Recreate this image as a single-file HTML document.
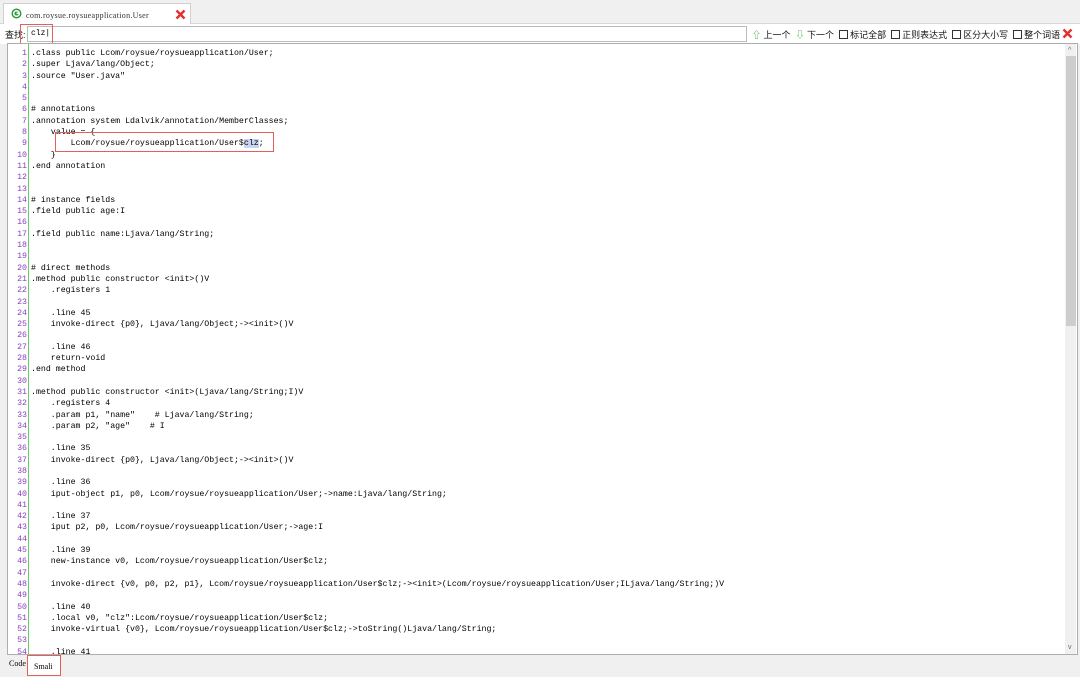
<!DOCTYPE html>
<html><head><meta charset="utf-8"><style>
*{margin:0;padding:0;box-sizing:border-box}
body{width:1080px;height:677px;background:#f0f0f0;position:relative;overflow:hidden;font-family:"Liberation Sans","Noto Sans CJK SC",sans-serif}
.tabbar{position:absolute;left:0;top:0;width:1080px;height:24px;background:#f0f0f0;border-bottom:1px solid #d8d8d8}
.tab{position:absolute;left:3px;top:3px;width:188px;height:22px;background:#fff;border:1px solid #d0d0d0;border-bottom:none}
.tab .t{position:absolute;left:22px;top:7px;font:8px "Liberation Serif",serif;color:#333;letter-spacing:.3px}
.find{position:absolute;left:0;top:24px;width:1080px;height:20px;background:#fff}
.inp{position:absolute;left:27px;top:26px;width:720px;height:16px;border:1px solid #bbb;background:#fff;font:8px "Liberation Mono",monospace;padding:2px 0 0 3px}
.lbl{position:absolute;top:28px;font-size:9px;color:#111;white-space:nowrap}
.cb{display:inline-block;width:9px;height:9px;border:1px solid #333;vertical-align:-1px;margin-right:2px;background:#fff}
.editor{position:absolute;left:7px;top:43px;width:1071px;height:612px;background:#fff;border:1px solid #adadad;overflow:hidden}
.gut{position:absolute;left:0;top:0;width:21px;height:100%;border-right:1px solid #6c6;}
pre{position:absolute;top:4px;font:8.25px/11.3px "Liberation Mono",monospace;white-space:pre}
.nums{left:0;width:19px;text-align:right;color:#8a3fbf}
.code{left:23px;color:#000}
.sb{position:absolute;right:1px;top:0;width:11px;height:610px;background:#f0f0f0}
.thumb{position:absolute;left:1px;top:12px;width:10px;height:270px;background:#cdcdcd}
.bottom{position:absolute;left:0;top:655px;width:1080px;height:22px;background:#f0f0f0}
.red{position:absolute;border:1px solid #e06060}
</style></head><body>
<div class="tabbar"><div class="tab">
<svg style="position:absolute;left:7px;top:4px" width="11" height="11" viewBox="0 0 11 11"><circle cx="5.5" cy="5.5" r="5" fill="#2a9a3a"/><circle cx="5.5" cy="5.5" r="2.8" fill="none" stroke="#fff" stroke-width="1.5"/><rect x="5.5" y="4.5" width="3" height="1.5" fill="#fff"/></svg>
<span class="t">com.roysue.roysueapplication.User</span>
<svg style="position:absolute;left:171px;top:5px" width="11" height="11" viewBox="0 0 11 11"><path d="M1.5 1.5L9.5 9.5M9.5 1.5L1.5 9.5" stroke="#e03030" stroke-width="2.4"/></svg>
</div></div>
<div class="find"></div>
<div class="lbl" style="left:5px">查找:</div>
<div class="inp">clz|</div>
<div class="lbl" style="left:752px"><span style="color:#3a3">⇧</span> 上一个 &nbsp;<span style="color:#3a3">⇩</span> 下一个 &nbsp;<span class="cb"></span>标记全部 &nbsp;<span class="cb"></span>正则表达式 &nbsp;<span class="cb"></span>区分大小写 &nbsp;<span class="cb"></span>整个词语</div>
<svg style="position:absolute;left:1062px;top:28px" width="11" height="11" viewBox="0 0 11 11"><path d="M1.5 1.5L9.5 9.5M9.5 1.5L1.5 9.5" stroke="#e03030" stroke-width="2.4"/></svg>
<div class="red" style="left:20px;top:24px;width:33px;height:20px"></div>
<div class="editor"><div class="gut"></div>
<pre class="nums">1
2
3
4
5
6
7
8
9
10
11
12
13
14
15
16
17
18
19
20
21
22
23
24
25
26
27
28
29
30
31
32
33
34
35
36
37
38
39
40
41
42
43
44
45
46
47
48
49
50
51
52
53
54</pre>
<pre class="code">.class public Lcom/roysue/roysueapplication/User;
.super Ljava/lang/Object;
.source "User.java"


# annotations
.annotation system Ldalvik/annotation/MemberClasses;
    value = {
        Lcom/roysue/roysueapplication/User$<span style="background:#c8d4f0">clz</span>;
    }
.end annotation


# instance fields
.field public age:I

.field public name:Ljava/lang/String;


# direct methods
.method public constructor &lt;init&gt;()V
    .registers 1

    .line 45
    invoke-direct {p0}, Ljava/lang/Object;-&gt;&lt;init&gt;()V

    .line 46
    return-void
.end method

.method public constructor &lt;init&gt;(Ljava/lang/String;I)V
    .registers 4
    .param p1, "name"    # Ljava/lang/String;
    .param p2, "age"    # I

    .line 35
    invoke-direct {p0}, Ljava/lang/Object;-&gt;&lt;init&gt;()V

    .line 36
    iput-object p1, p0, Lcom/roysue/roysueapplication/User;-&gt;name:Ljava/lang/String;

    .line 37
    iput p2, p0, Lcom/roysue/roysueapplication/User;-&gt;age:I

    .line 39
    new-instance v0, Lcom/roysue/roysueapplication/User$clz;

    invoke-direct {v0, p0, p2, p1}, Lcom/roysue/roysueapplication/User$clz;-&gt;&lt;init&gt;(Lcom/roysue/roysueapplication/User;ILjava/lang/String;)V

    .line 40
    .local v0, "clz":Lcom/roysue/roysueapplication/User$clz;
    invoke-virtual {v0}, Lcom/roysue/roysueapplication/User$clz;-&gt;toString()Ljava/lang/String;

    .line 41</pre>
<div class="sb"><div class="thumb"></div>
<div style="position:absolute;left:3px;top:3px;font-size:7px;color:#666">^</div>
<div style="position:absolute;left:3px;top:600px;font-size:7px;color:#666">v</div></div>
</div>
<div class="red" style="left:55px;top:132px;width:219px;height:20px"></div>
<div class="bottom">
<div style="position:absolute;left:9px;top:4px;font:8px 'Liberation Serif',serif">Code</div>
<div style="position:absolute;left:27px;top:0;width:34px;height:21px;background:#fff;border:1px solid #e06060;font:8px 'Liberation Serif',serif;padding:6px 0 0 6px">Smali</div>
</div>
</body></html>
